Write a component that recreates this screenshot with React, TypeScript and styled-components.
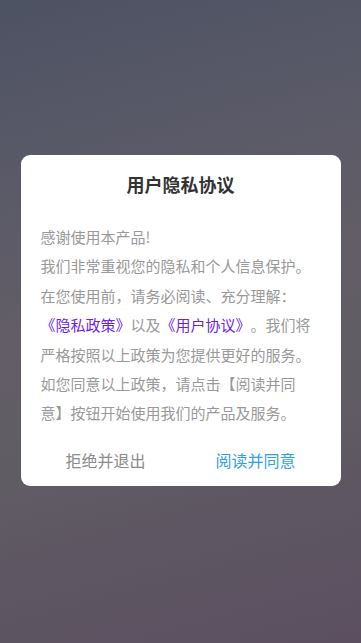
import React from "react";
import styled, { createGlobalStyle } from "styled-components";

const Global = createGlobalStyle`
  html, body { margin: 0; padding: 0; }
  body {
    font-family: "Noto Sans CJK SC", "Noto Sans", sans-serif;
    text-spacing-trim: space-all;
    font-feature-settings: normal;
  }
`;

const Screen = styled.div`
  width: 361px;
  height: 643px;
  display: flex;
  align-items: flex-start;
  justify-content: center;
  padding-top: 155px;
  box-sizing: border-box;
  background: linear-gradient(165deg, #4d5263 0%, #5a5a68 25%, #625d66 45%, #605c64 65%, #5d5462 85%, #5c5060 100%);
`;

const Card = styled.div`
  width: 320px;
  background: #ffffff;
  border-radius: 9px;
  display: flex;
  flex-direction: column;
  padding: 17px 0 1px;
  box-sizing: border-box;
`;

const Title = styled.h2`
  margin: 0;
  text-align: center;
  font-size: 18px;
  line-height: 24px;
  font-weight: 700;
  color: #333333;
`;

const Body = styled.p`
  margin: 26px 20px 7px;
  font-size: 15px;
  line-height: 29.4px;
  color: #999999;
  text-spacing-trim: space-all;
  line-break: strict;
`;

const Link = styled.span`
  color: #6a1ff2;
`;

const Actions = styled.div`
  display: grid;
  grid-template-columns: 1fr 1fr;
  padding: 0 10px;
`;

const Action = styled.button<{ $primary?: boolean }>`
  border: 0;
  background: transparent;
  height: 50px;
  font-family: inherit;
  font-size: 16px;
  color: ${(p) => (p.$primary ? "#2e9ef0" : "#8c8c8c")};
  cursor: pointer;
  padding: 0;
`;

export default function App() {
  return (
    <>
      <Global />
      <Screen>
        <Card>
          <Title>用户隐私协议</Title>
          <Body>
            感谢使用本产品!
            <br />
            我们非常重视您的隐私和个人信息保护。
            <br />
            在您使用前，请务必阅读、充分理解：<Link>《隐私政策》</Link>以及<Link>《用户协议》</Link>。我们将严格按照以上政策为您提供更好的服务。如您同意以上政策，请点击【阅读并同意】按钮开始使用我们的产品及服务。
          </Body>
          <Actions>
            <Action>拒绝并退出</Action>
            <Action $primary>阅读并同意</Action>
          </Actions>
        </Card>
      </Screen>
    </>
  );
}
